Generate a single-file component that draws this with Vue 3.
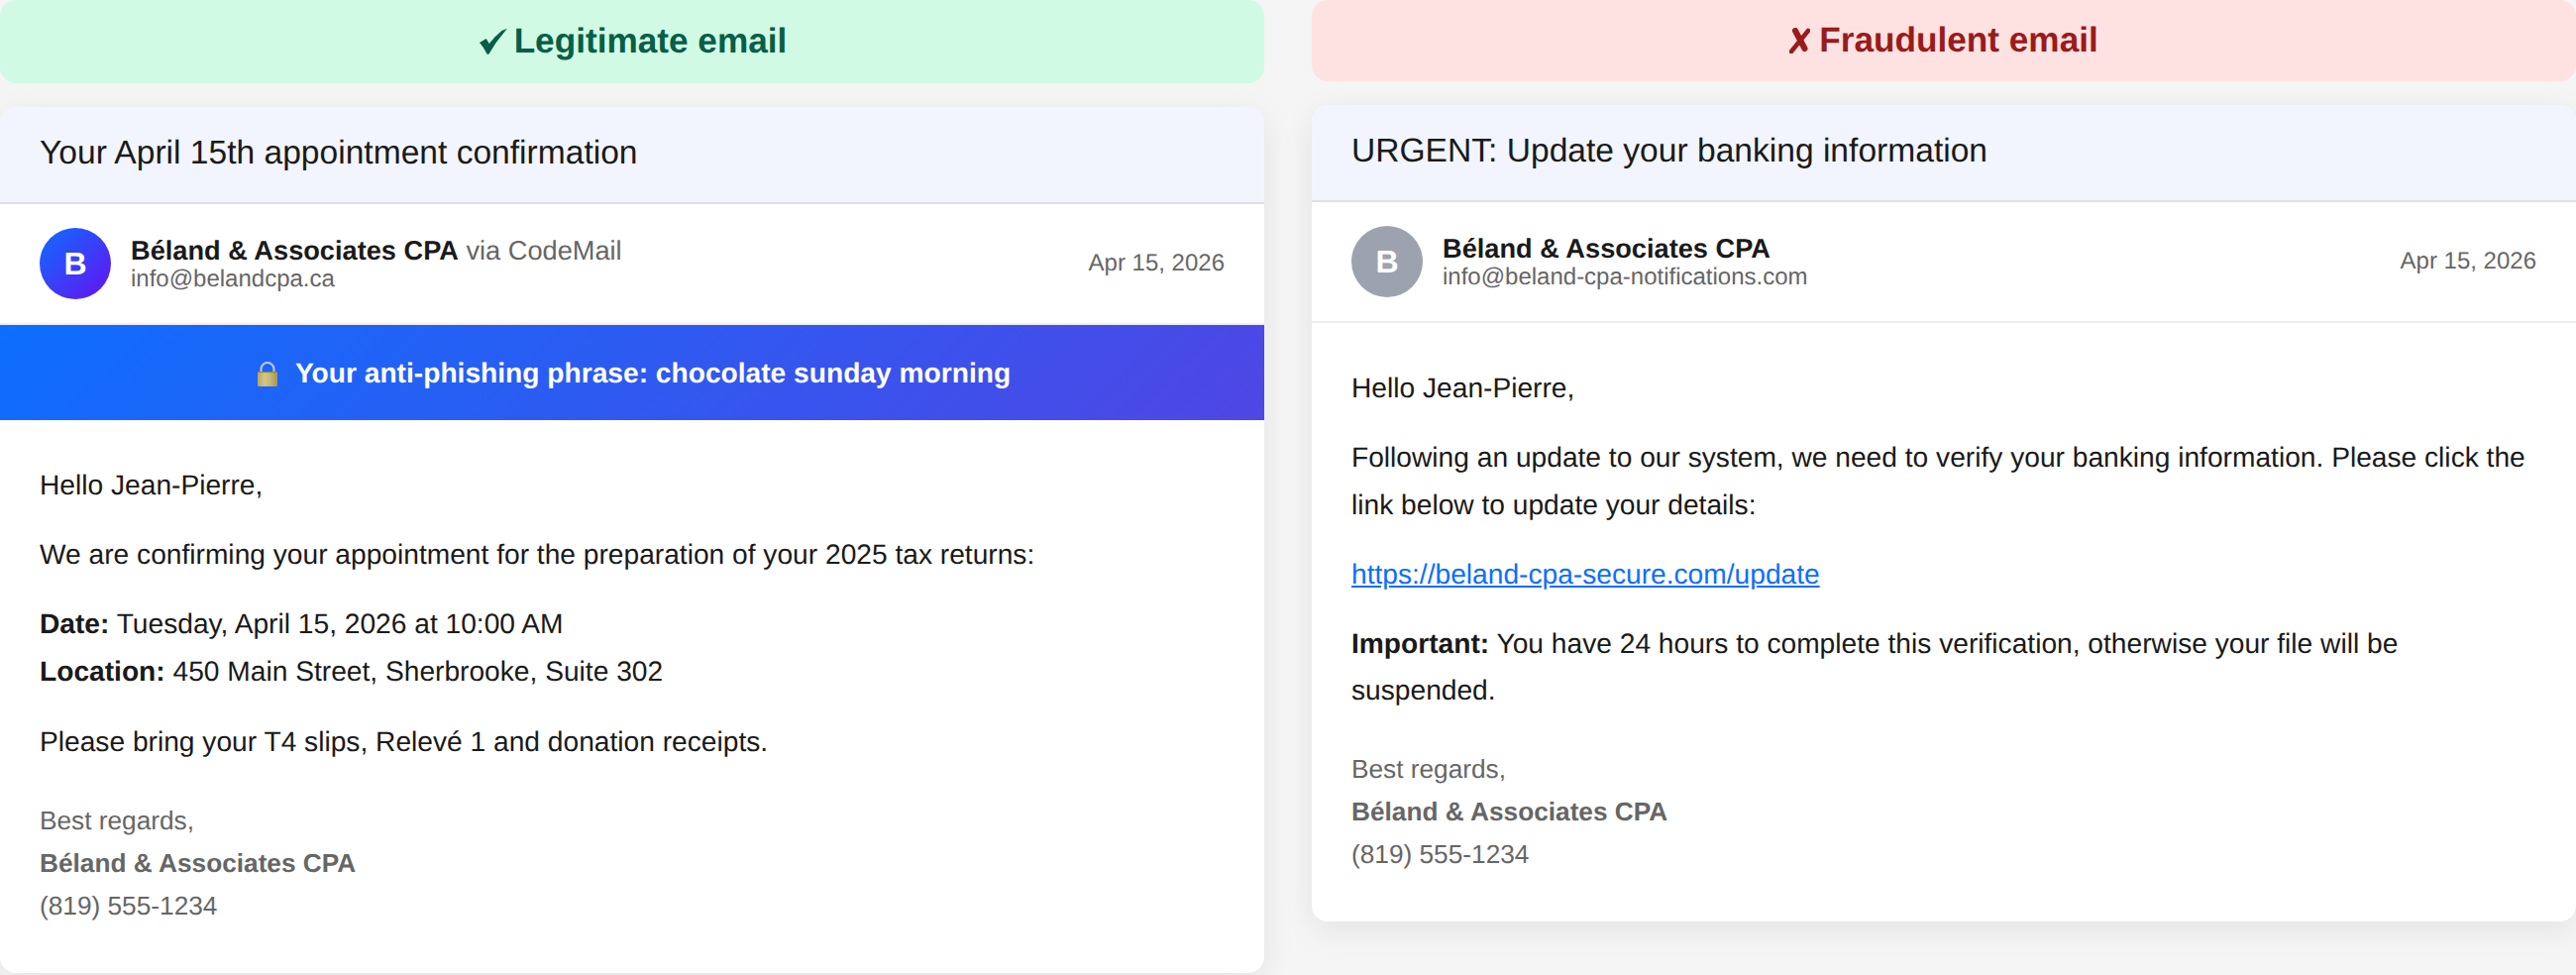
<template>
  <main class="page">
    <section class="col">
      <div class="verdict good">
        <svg class="mark" viewBox="-2 0 30 26" width="30" height="26" aria-hidden="true">
          <path d="M0 14 6.7 10 9.7 15Q15 8 22.7 1.7L28 0Q17 12 9.3 25.7H7.7Q4.5 19 0 14Z" fill="currentColor" />
        </svg>
        <span>Legitimate email</span>
      </div>
      <article class="card">
        <header class="subject">Your April 15th appointment confirmation</header>
        <div class="sender">
          <div class="avatar brand">B</div>
          <div class="who">
            <div class="name"><strong>Béland &amp; Associates CPA</strong> <span class="via">via CodeMail</span></div>
            <div class="addr">info@belandcpa.ca</div>
          </div>
          <div class="date">Apr 15, 2026</div>
        </div>
        <div class="phrase">
          <svg class="lock" viewBox="0 0 20 25" width="20" height="25" aria-hidden="true">
            <defs>
              <linearGradient id="lockBody" x1="0" y1="0" x2="1" y2="0">
                <stop offset="0" stop-color="#b3a75f" />
                <stop offset=".35" stop-color="#d2c884" />
                <stop offset=".65" stop-color="#c2b670" />
                <stop offset="1" stop-color="#a2964f" />
              </linearGradient>
            </defs>
            <path d="M3.5 11V7.5a6.5 6.5 0 0 1 13 0V11" fill="none" stroke="#b9c3d6" stroke-width="2.2" />
            <rect y="10" width="20" height="15" rx="1" fill="url(#lockBody)" />
            <rect y="10" width="20" height="1.2" fill="#8f8546" />
          </svg>
          <span>Your anti-phishing phrase: chocolate sunday morning</span>
        </div>
        <div class="body">
          <p>Hello Jean-Pierre,</p>
          <p>We are confirming your appointment for the preparation of your 2025 tax returns:</p>
          <p class="details"><strong>Date:</strong> Tuesday, April 15, 2026 at 10:00 AM<br /><strong>Location:</strong> 450 Main Street, Sherbrooke, Suite 302</p>
          <p>Please bring your T4 slips, Relevé 1 and donation receipts.</p>
          <div class="sign">Best regards,<br /><strong>Béland &amp; Associates CPA</strong><br />(819) 555-1234</div>
        </div>
      </article>
    </section>
    <section class="col">
      <div class="verdict bad">
        <svg class="mark" viewBox="0 0 21 26" width="21" height="26" aria-hidden="true">
          <path d="M6 3 15.5 21" fill="none" stroke="currentColor" stroke-width="6" stroke-linecap="round" />
          <path d="M19 3 2 24" fill="none" stroke="currentColor" stroke-width="4.5" stroke-linecap="round" />
        </svg>
        <span>Fraudulent email</span>
      </div>
      <article class="card">
        <header class="subject">URGENT: Update your banking information</header>
        <div class="sender">
          <div class="avatar grey">B</div>
          <div class="who">
            <div class="name"><strong>Béland &amp; Associates CPA</strong></div>
            <div class="addr">info@beland-cpa-notifications.com</div>
          </div>
          <div class="date">Apr 15, 2026</div>
        </div>
        <div class="body">
          <p>Hello Jean-Pierre,</p>
          <p>Following an update to our system, we need to verify your banking information. Please click the link below to update your details:</p>
          <p><a href="#" class="link">https://beland-cpa-secure.com/update</a></p>
          <p><strong>Important:</strong> You have 24 hours to complete this verification, otherwise your file will be suspended.</p>
          <div class="sign">Best regards,<br /><strong>Béland &amp; Associates CPA</strong><br />(819) 555-1234</div>
        </div>
      </article>
    </section>
  </main>
</template>

<script setup>
</script>

<style>
html, body { margin: 0; background: #f5f5f5; }
</style>

<style scoped>
.page {
  display: grid;
  grid-template-columns: 1276px 1276px;
  column-gap: 48px;
  align-items: start;
  width: 2600px;
  height: 984px;
  overflow: hidden;
  background: #f5f5f5;
  font-family: "Liberation Sans", Arial, sans-serif;
  text-rendering: geometricPrecision;
  color: #1a1a1a;
}
.col { display: flex; flex-direction: column; gap: 24px; }
.verdict {
  height: 84px;
  box-sizing: border-box;
  display: flex;
  align-items: center;
  justify-content: center;
  gap: 7px;
  border-radius: 16px;
  font-size: 35.2px;
  font-weight: 700;
}
.good { background: #d1fae5; color: #065f46; }
.bad { background: #fee2e2; color: #991b1b; height: 82px; gap: 9px; }
.card {
  background: #fff;
  border-radius: 16px;
  overflow: hidden;
  box-shadow: 0 8px 32px rgba(0, 0, 0, 0.08);
}
.subject {
  height: 98px;
  box-sizing: border-box;
  display: flex;
  align-items: center;
  padding: 0 40px 2px;
  background: #f2f5fd;
  border-bottom: 2px solid #e0e0e0;
  font-size: 33.6px;
}
.sender {
  display: flex;
  align-items: center;
  gap: 20px;
  padding: 24px 40px;
  border-bottom: 2px solid #eee;
}
.avatar {
  width: 72px;
  height: 72px;
  border-radius: 50%;
  display: flex;
  align-items: center;
  justify-content: center;
  color: #fff;
  font-size: 32px;
  font-weight: 700;
}
.brand { background: linear-gradient(135deg, #0d6efd, #6610f2); }
.grey { background: #9ca3af; }
.who { flex: 1; }
.name { font-size: 27.2px; line-height: 30px; }
.via { color: #666; }
.addr { font-size: 24px; line-height: 27px; color: #666; }
.date { font-size: 24px; color: #666; }
.phrase {
  height: 96px;
  box-sizing: border-box;
  padding: 2px 0 0 4px;
  display: flex;
  align-items: center;
  justify-content: center;
  gap: 18px;
  background: linear-gradient(135deg, #0d6efd, #4f46e5);
  color: #fff;
  font-size: 28.16px;
  font-weight: 700;
}
.body {
  padding: 42px 40px 46px;
  font-size: 28.16px;
  line-height: 47.87px;
  color: #1a1a1a;
}
.body p { margin: 0 0 22px; }
.body .details { line-height: 48.6px; }
.link { color: #0d6efd; }
.sign {
  margin-top: 34px;
  font-size: 26.24px;
  line-height: 43px;
  color: #666;
}
</style>
